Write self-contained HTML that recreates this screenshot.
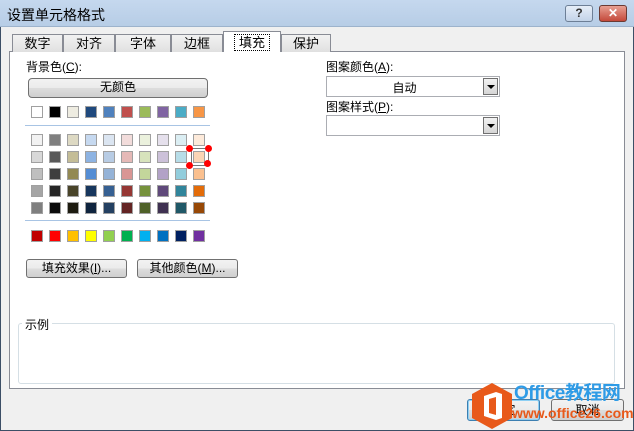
<!DOCTYPE html><html><head><meta charset="utf-8"><style>
*{box-sizing:border-box}
html,body{margin:0;width:634px;height:431px;overflow:hidden}
body{font-family:"Liberation Sans","Noto Sans CJK SC",sans-serif;font-size:12px;color:#000;background:#f0f0f0;position:relative}
.a{position:absolute;white-space:nowrap}
.sw{position:absolute;width:12px;height:12px;border:1px solid #a0a0a0}
.btn{position:absolute;border:1px solid #707070;border-radius:3px;background:linear-gradient(#f2f2f2,#ebebeb 50%,#dddddd 51%,#cfcfcf);text-align:center;line-height:17px;white-space:nowrap}
.tab{position:absolute;top:34px;height:18px;border:1px solid #898c95;border-bottom:none;background:linear-gradient(#f2f2f2,#e0e0e0);text-align:center;line-height:17px;font-size:13px}
.combo{position:absolute;border:1px solid #abadb3;background:#fff;height:21px}
.dd{position:absolute;right:1px;top:1px;width:15px;height:17px;border:1px solid #707070;background:linear-gradient(#f2f2f2,#d5d5d5)}
.dd:after{content:"";position:absolute;left:3px;top:6px;border:4px solid transparent;border-top:4px solid #000;border-bottom:none}
</style></head><body>
<div class="a" style="left:0;top:0;width:634px;height:431px;border:1px solid #3c4f66;border-top:none"></div>
<div class="a" style="left:0;top:0;width:634px;height:27px;background:linear-gradient(#c5d8ee,#b7cde6);border-bottom:1px solid #9db3cc"></div>
<div class="a" style="left:7px;top:5px;font-size:14px">设置单元格格式</div>
<div class="a" style="left:565px;top:5px;width:28px;height:17px;border:1px solid #6d7f96;border-radius:3px;background:linear-gradient(#e6eef8,#c3d3e8);text-align:center;font-size:12px;line-height:15px;font-weight:bold;color:#333">?</div>
<div class="a" style="left:599px;top:5px;width:28px;height:17px;border:1px solid #6b3a33;border-radius:3px;background:linear-gradient(#e8a093,#c4493a);text-align:center;color:#fff;font-weight:bold;line-height:15px">✕</div>
<div class="a" style="left:9px;top:51px;width:616px;height:338px;border:1px solid #898c95;background:#fff"></div>
<div class="tab" style="left:12px;width:51px">数字</div>
<div class="tab" style="left:63px;width:52px">对齐</div>
<div class="tab" style="left:115px;width:56px">字体</div>
<div class="tab" style="left:171px;width:52px">边框</div>
<div class="tab" style="left:223px;top:31px;height:21px;width:58px;background:#fff;line-height:21px"><span style="outline:1px dotted #000">&nbsp;填充&nbsp;</span></div>
<div class="tab" style="left:281px;width:50px">保护</div>
<div class="a" style="left:26px;top:58px">背景色(<u>C</u>):</div>
<div class="btn" style="left:28px;top:78px;width:180px;height:20px;border-radius:4px">无颜色</div>
<div class="a" style="left:25px;top:125px;width:185px;height:1px;background:#a8c4e4"></div>
<div class="a" style="left:25px;top:220px;width:185px;height:1px;background:#a8c4e4"></div>
<div id="g"></div>
<div class="a" style="left:191px;top:148px;width:18px;height:18px;border:1px solid #777"></div>
<div class="a" style="left:186px;top:145px;width:7px;height:7px;border-radius:50%;background:#f00"></div>
<div class="a" style="left:205px;top:145px;width:7px;height:7px;border-radius:50%;background:#f00"></div>
<div class="a" style="left:186px;top:162px;width:7px;height:7px;border-radius:50%;background:#f00"></div>
<div class="a" style="left:204px;top:160px;width:7px;height:7px;border-radius:50%;background:#f00"></div>
<div class="btn" style="left:26px;top:259px;width:101px;height:19px">填充效果(<u>I</u>)...</div>
<div class="btn" style="left:137px;top:259px;width:101px;height:19px">其他颜色(<u>M</u>)...</div>
<div class="a" style="left:326px;top:58px">图案颜色(<u>A</u>):</div>
<div class="combo" style="left:326px;top:76px;width:174px"><div class="a" style="left:0;width:155px;text-align:center;top:2px">自动</div><div class="dd"></div></div>
<div class="a" style="left:326px;top:98px">图案样式(<u>P</u>):</div>
<div class="combo" style="left:326px;top:115px;width:174px"><div class="dd"></div></div>
<div class="a" style="left:18px;top:323px;width:597px;height:61px;border:1px solid #d5dfe5;border-radius:3px"></div>
<div class="a" style="left:22px;top:316px;background:#fff;padding:0 3px">示例</div>
<div class="btn" style="left:467px;top:399px;width:73px;height:22px;line-height:20px;border-color:#3c7fb1;box-shadow:0 0 0 1px #8ed0f4 inset">确定</div>
<div class="btn" style="left:551px;top:399px;width:73px;height:22px;line-height:20px">取消</div>
<svg class="a" style="left:470px;top:382px" width="44" height="48" viewBox="0 0 44 48"><polygon points="22,1 42,12 42,36 22,47 2,36 2,12" fill="#e8591a"/><path d="M14 14 L26 10 L32 12 L32 36 L26 38 L14 34 Z M19 17 L19 31 L26 33 L26 15 Z" fill="#fff"/></svg>
<div class="a" style="left:514px;top:383px;font-size:19px;line-height:22px;font-weight:bold;color:#2e9be6;letter-spacing:-0.5px">Office教程网</div>
<div class="a" style="left:512px;top:405px;font-size:14px;line-height:16px;font-weight:bold;color:#e8591a">www.office26.com</div>
<script>
var top1=["#ffffff","#000000","#eeece1","#1f497d","#4f81bd","#c0504d","#9bbb59","#8064a2","#4bacc6","#f79646"];
var th=[["#f2f2f2","#7f7f7f","#ddd9c3","#c6d9f0","#dbe5f1","#f2dcdb","#ebf1dd","#e5e0ec","#dbeef3","#fdeada"],
["#d8d8d8","#595959","#c4bd97","#8db3e2","#b8cce4","#e5b9b7","#d7e3bc","#ccc1d9","#b7dde8","#fbd5b5"],
["#bfbfbf","#3f3f3f","#938953","#548dd4","#95b3d7","#d99694","#c3d69b","#b2a2c7","#92cddc","#fac08f"],
["#a5a5a5","#262626","#494429","#17365d","#366092","#953734","#76923c","#5f497a","#31859b","#e36c09"],
["#7f7f7f","#0c0c0c","#1d1b10","#0f243e","#244061","#632423","#4f6128","#3f3151","#205867","#974806"]];
var st=["#c00000","#ff0000","#ffc000","#ffff00","#92d050","#00b050","#00b0f0","#0070c0","#002060","#7030a0"];
var h="";function row(c,y){c.forEach(function(v,i){h+='<div class="sw" style="left:'+(31+i*18)+'px;top:'+y+'px;background:'+v+'"></div>'})}
row(top1,106);th.forEach(function(r,i){row(r,134+i*17)});row(st,230);
document.getElementById("g").innerHTML=h;
</script>
</body></html>
